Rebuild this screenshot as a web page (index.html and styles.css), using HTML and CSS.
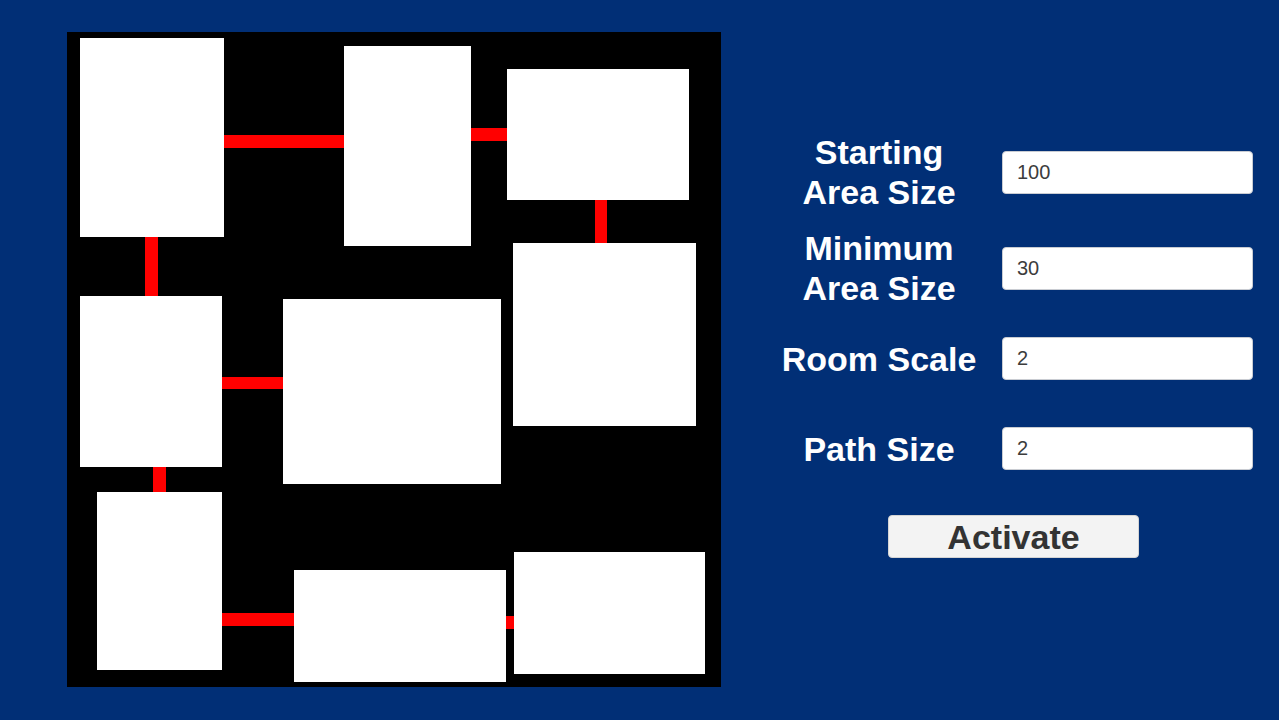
FILE: index.html
```html
<!DOCTYPE html>
<html lang="en">
<head>
  <meta charset="UTF-8">
  <meta name="viewport" content="width=device-width, initial-scale=1.0">
  <title>Dungeon Generator</title>
  <link rel="stylesheet" href="styles.css">
</head>
<body>
  <div class="layout">
    <!-- generated map: rooms and the corridors between them -->
    <div class="map">
      <div class="path" style="left:157px; top:103px; width:120px; height:13px;"></div>
      <div class="path" style="left:404px; top:96px; width:36px; height:13px;"></div>
      <div class="path" style="left:528px; top:168px; width:12px; height:43px;"></div>
      <div class="path" style="left:78px; top:205px; width:13px; height:59px;"></div>
      <div class="path" style="left:155px; top:345px; width:61px; height:12px;"></div>
      <div class="path" style="left:86px; top:435px; width:13px; height:25px;"></div>
      <div class="path" style="left:155px; top:581px; width:72px; height:13px;"></div>
      <div class="path" style="left:439px; top:584px; width:8px; height:13px;"></div>

      <div class="room" style="left:13px; top:6px; width:144px; height:199px;"></div>
      <div class="room" style="left:277px; top:14px; width:127px; height:200px;"></div>
      <div class="room" style="left:440px; top:37px; width:182px; height:131px;"></div>
      <div class="room" style="left:446px; top:211px; width:183px; height:183px;"></div>
      <div class="room" style="left:13px; top:264px; width:142px; height:171px;"></div>
      <div class="room" style="left:216px; top:267px; width:218px; height:185px;"></div>
      <div class="room" style="left:30px; top:460px; width:125px; height:178px;"></div>
      <div class="room" style="left:227px; top:538px; width:212px; height:112px;"></div>
      <div class="room" style="left:447px; top:520px; width:191px; height:122px;"></div>
    </div>

    <div class="panel">
      <div class="field">
        <label for="startSize">Starting<br>Area Size</label>
        <input type="text" id="startSize" value="100">
      </div>
      <div class="field second">
        <label for="minSize">Minimum<br>Area Size</label>
        <input type="text" id="minSize" value="30">
      </div>
      <div class="field third">
        <label for="roomScale">Room Scale</label>
        <input type="text" id="roomScale" value="2">
      </div>
      <div class="field fourth">
        <label for="pathSize">Path Size</label>
        <input type="text" id="pathSize" value="2">
      </div>
      <button class="activate">Activate</button>
    </div>
  </div>
</body>
</html>
```

FILE: styles.css
```css
:root {
  --bg-color: #012f76;
  --room-color: #ffffff;
  --path-color: #ff0000;
  --text-color: #ffffff;
}

* {
  margin: 0;
  padding: 0;
  box-sizing: border-box;
}

body {
  background-color: var(--bg-color);
  font-family: "Liberation Sans", Arial, sans-serif;
  color: var(--text-color);
  height: 720px;
  overflow: hidden;
}

.layout {
  display: flex;
  padding: 32px 0 0 67px;
}

.map {
  position: relative;
  width: 654px;
  height: 655px;
  background-color: #000;
  flex-shrink: 0;
}

.room {
  position: absolute;
  background-color: var(--room-color);
}

.path {
  position: absolute;
  background-color: var(--path-color);
}

.panel {
  display: flex;
  flex-direction: column;
  margin-left: 58px;
  padding-top: 100px;
  width: 474px;
}

.field {
  display: flex;
  align-items: center;
  gap: 23px;
}

.field label {
  width: 200px;
  text-align: center;
  font-size: 34px;
  font-weight: bold;
  line-height: 40px;
}

.field input {
  width: 251px;
  height: 43px;
  border: 1px solid #c9ccd2;
  border-radius: 4px;
  background-color: #fff;
  padding: 0 14px;
  font-family: "Liberation Sans", Arial, sans-serif;
  font-size: 20px;
  color: #3c3c3c;
  outline: none;
}

.field.second {
  margin-top: 16px;
}

.field.third {
  margin-top: 29px;
}

.field.fourth {
  margin-top: 47px;
}

.activate {
  align-self: flex-start;
  margin: 45px 0 0 109px;
  width: 251px;
  height: 43px;
  background-color: #f3f3f3;
  border: 1px solid #d4d4d4;
  border-radius: 4px;
  font-family: "Liberation Sans", Arial, sans-serif;
  font-size: 34px;
  font-weight: bold;
  color: #333;
  line-height: 43px;
  cursor: pointer;
}
```
